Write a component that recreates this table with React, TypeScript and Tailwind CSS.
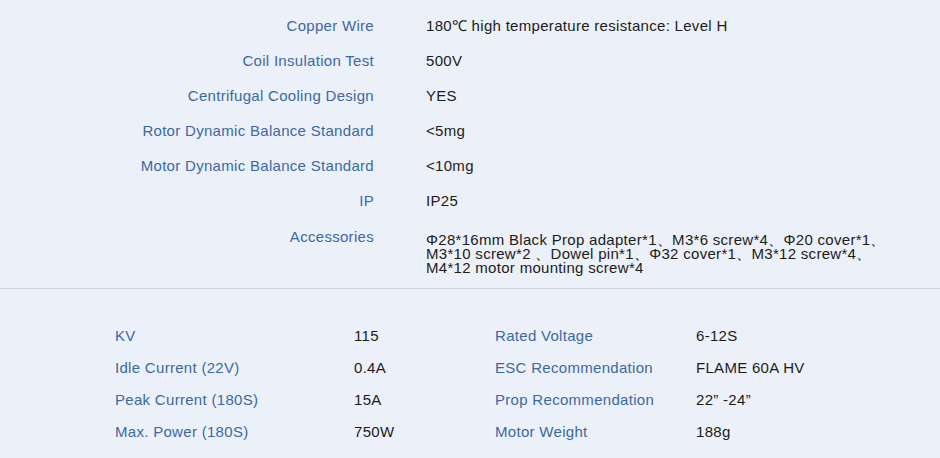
import React from 'react';

const specs = [
  { label: 'Copper Wire', value: '180℃ high temperature resistance: Level H' },
  { label: 'Coil Insulation Test', value: '500V' },
  { label: 'Centrifugal Cooling Design', value: 'YES' },
  { label: 'Rotor Dynamic Balance Standard', value: '<5mg' },
  { label: 'Motor Dynamic Balance Standard', value: '<10mg' },
  { label: 'IP', value: 'IP25' },
];

const params = [
  ['KV', '115', 'Rated Voltage', '6-12S'],
  ['Idle Current (22V)', '0.4A', 'ESC Recommendation', 'FLAME 60A HV'],
  ['Peak Current (180S)', '15A', 'Prop Recommendation', '22” -24”'],
  ['Max. Power (180S)', '750W', 'Motor Weight', '188g'],
];

export default function App() {
  return (
    <div className="min-h-screen w-full bg-[#ecf0f8] text-[15px] tracking-[0.3px] text-[#1c1c1c] font-['Liberation_Sans','Noto_Sans',sans-serif]">
      {/* Spec list */}
      <div className="pt-[8.5px] pb-[13.5px]">
        {specs.map((s) => (
          <div key={s.label} className="flex h-[35px] items-center">
            <div className="w-[374px] shrink-0 text-right text-[#3b6aa3]">{s.label}</div>
            <div className="ml-[52px]">{s.value}</div>
          </div>
        ))}
        <div className="flex items-start">
          <div className="w-[374px] shrink-0 text-right leading-[35px] text-[#3b6aa3]">Accessories</div>
          <div className="ml-[52px] mt-[14px] whitespace-nowrap leading-[14px]">
            Φ28*16mm Black Prop adapter*1、M3*6 screw*4、Φ20 cover*1、
            <br />
            M3*10 screw*2 、Dowel pin*1、Φ32 cover*1、M3*12 screw*4、
            <br />
            M4*12 motor mounting screw*4
          </div>
        </div>
      </div>

      <div className="h-px w-full bg-[#cdd3dc]" />

      {/* Parameter grid */}
      <div className="pl-[115px] pt-[31px]">
        {params.map((r) => (
          <div key={r[0]} className="grid h-[32px] grid-cols-[239px_141px_201px_1fr] items-center">
            <div className="text-[#3b6aa3]">{r[0]}</div>
            <div>{r[1]}</div>
            <div className="text-[#3b6aa3]">{r[2]}</div>
            <div>{r[3]}</div>
          </div>
        ))}
      </div>
    </div>
  );
}
